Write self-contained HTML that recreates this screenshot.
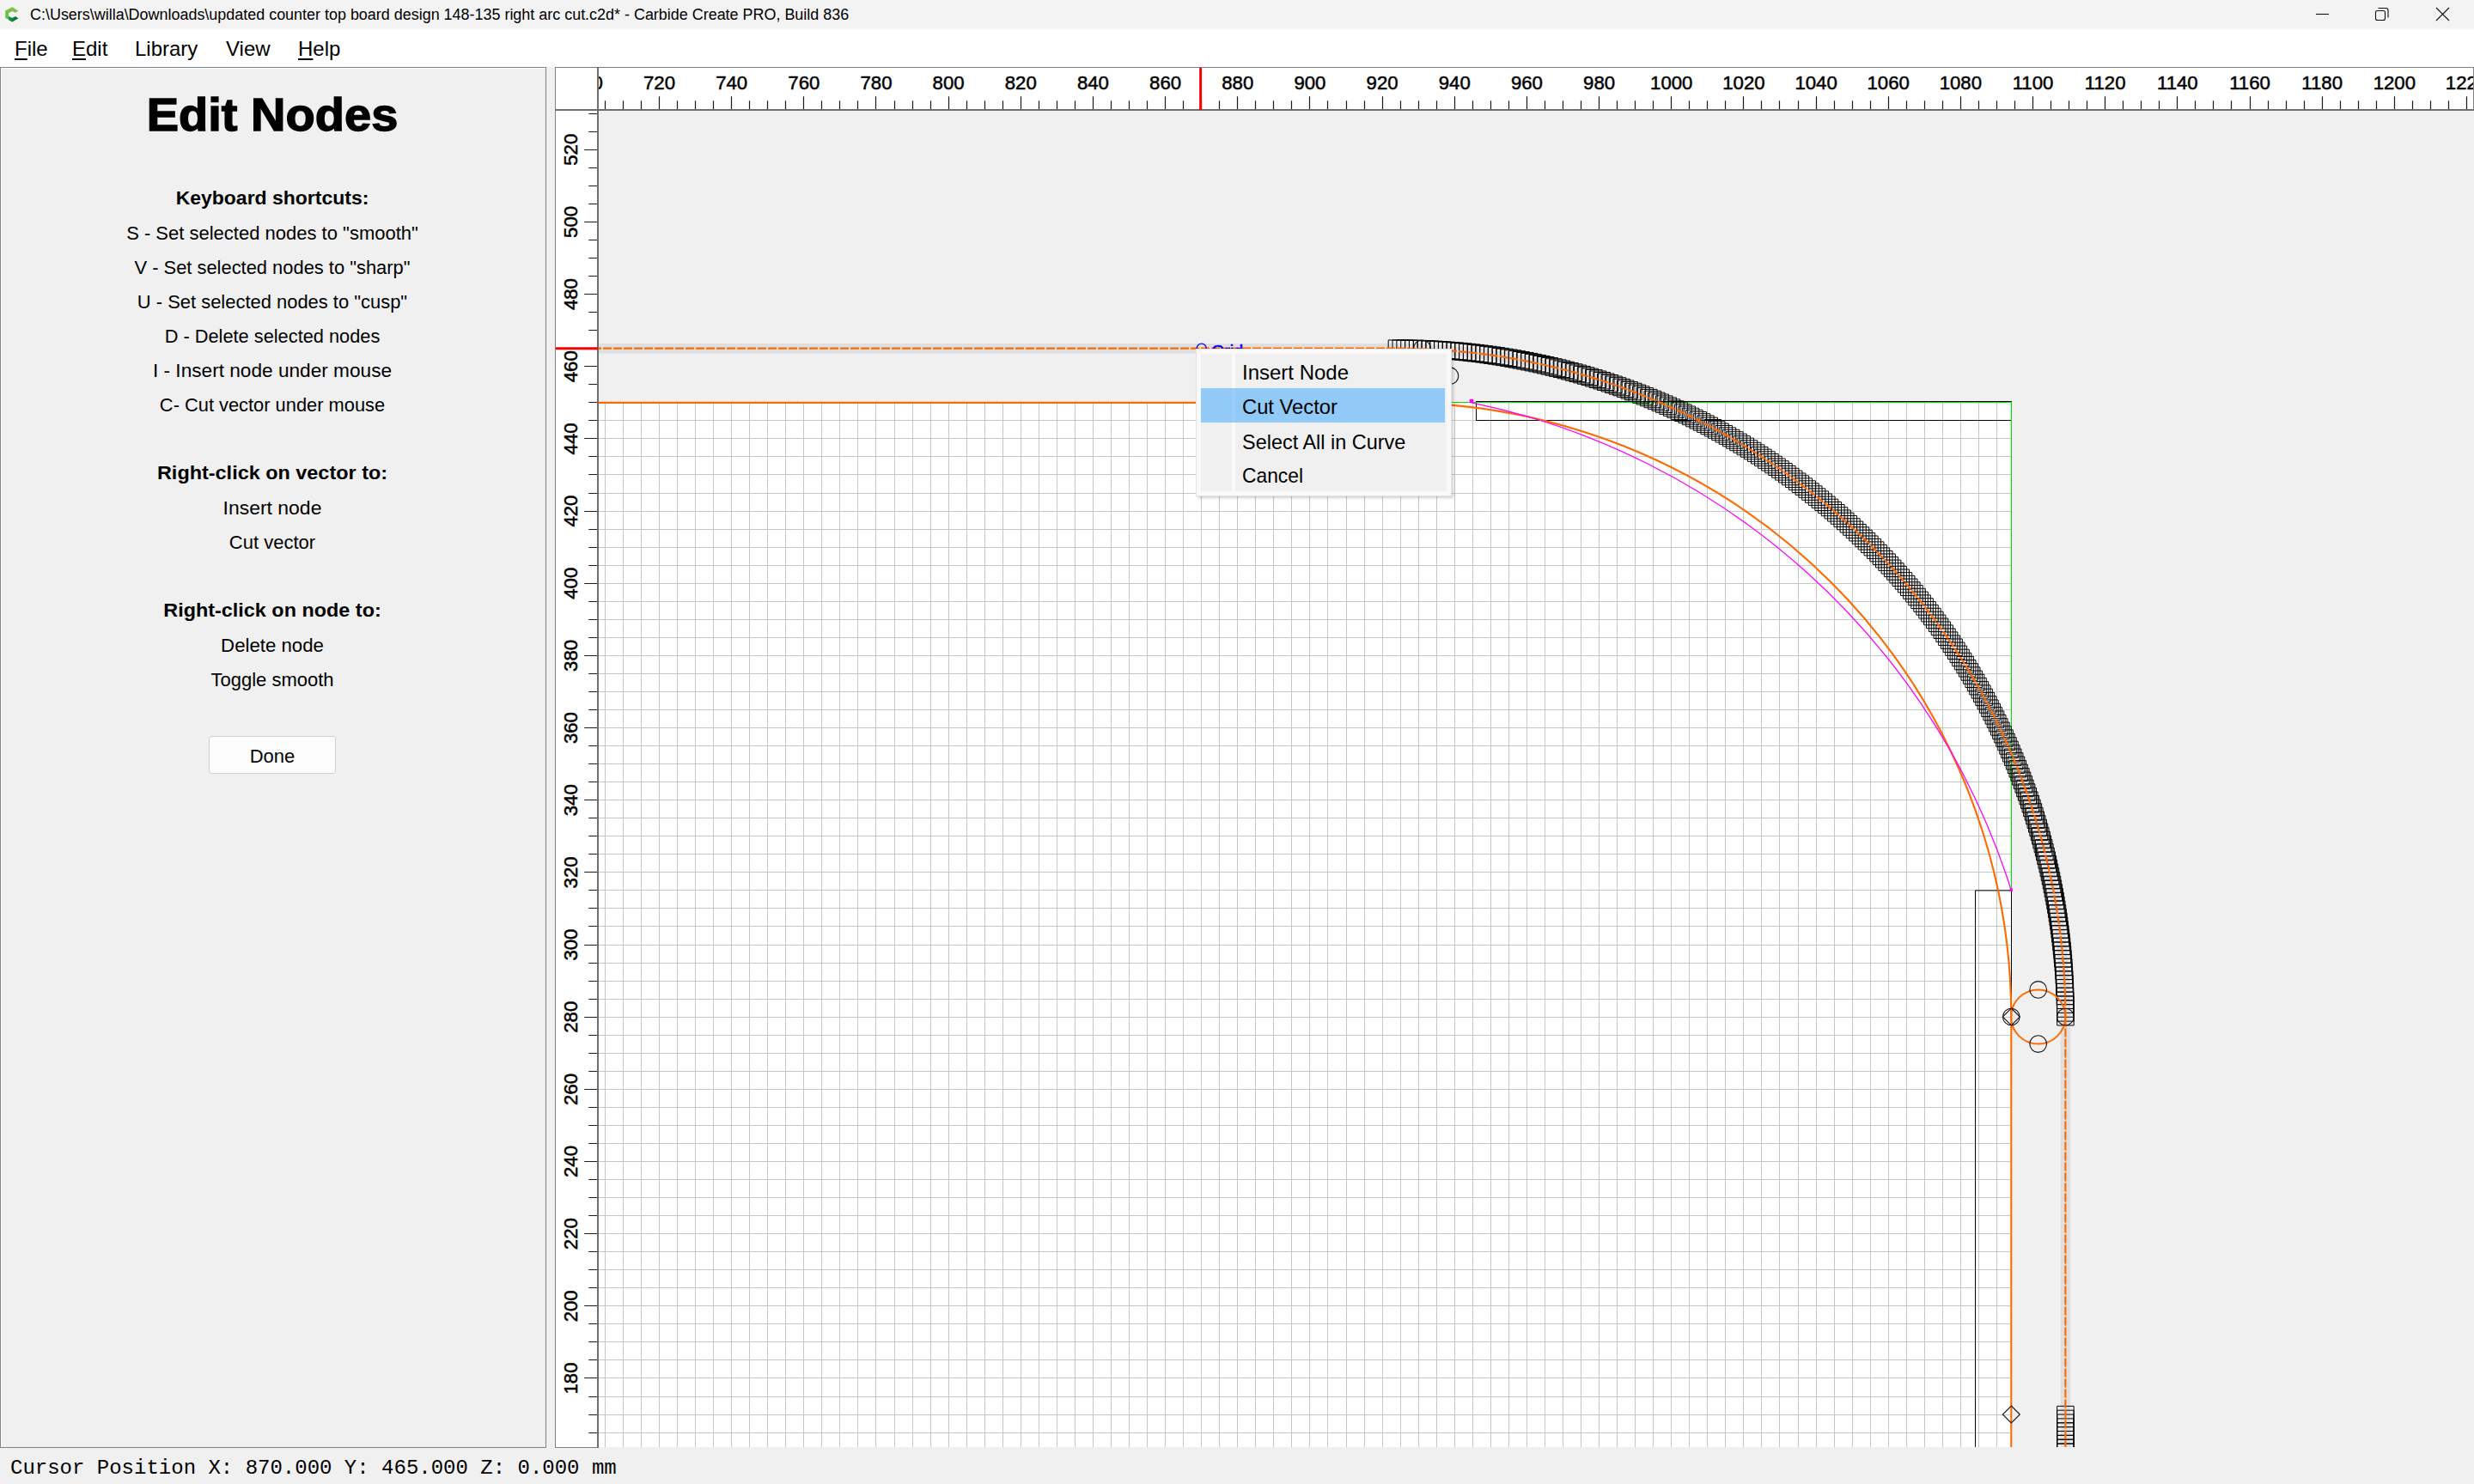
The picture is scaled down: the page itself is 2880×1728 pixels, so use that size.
<!DOCTYPE html><html><head><meta charset="utf-8"><style>
*{margin:0;padding:0;box-sizing:border-box}
html,body{width:2880px;height:1728px;overflow:hidden;background:#f0f0f0;font-family:"Liberation Sans", sans-serif;color:#000}
.abs{position:absolute}
#title{left:0;top:0;width:2880px;height:34px;background:#f3f3f3}
#menubar{left:0;top:34px;width:2880px;height:44px;background:#fff}
.mi{position:absolute;top:42px;font-size:24px;line-height:30px;white-space:nowrap}
#panel{left:0;top:78px;width:636px;height:1608px;background:#f0f0f0;border:1px solid #7a8490}
.pl{position:absolute;left:0;width:634px;text-align:center;white-space:nowrap;font-size:22px;line-height:26px}
.plb{font-weight:bold}
#done{left:243px;top:857px;width:148px;height:44px;background:#fdfdfd;border:1px solid #d0d0d0;border-radius:3px}
#status{left:12px;top:1694px;font-family:"Liberation Mono", monospace;font-size:24px;line-height:28px;white-space:nowrap}
#cmenu{left:1392px;top:406px;width:298px;height:172px;background:#f9f9f9;border:1px solid #e4e4e4;box-shadow:2px 2px 3px rgba(0,0,0,0.18)}
.cmi{position:absolute;left:1446px;font-size:24px;line-height:30px;white-space:nowrap}
</style></head><body>
<div id="title" class="abs"></div>
<svg class="abs" style="left:0;top:0" width="40" height="34" viewBox="0 0 40 34">
<defs><linearGradient id="icg" x1="0" y1="0" x2="1" y2="0"><stop offset="0" stop-color="#0f9d48"/><stop offset="1" stop-color="#05662e"/></linearGradient>
<linearGradient id="icl" x1="0" y1="0" x2="0" y2="1"><stop offset="0" stop-color="#84c540"/><stop offset="1" stop-color="#55b85a"/></linearGradient></defs>
<polygon points="14.26,8.2 21.3,12.4 17.8,14.7 14.26,13.1 10.06,15.2 10.06,18.9 14.26,21 17.8,19.2 21.3,21.3 14.26,25.5 6.2,20.8 6.2,12.2" fill="url(#icl)"/>
<polygon points="10.06,18.9 14.26,21 17.8,19.2 21.3,21.3 14.26,25.5 10.06,23.2" fill="url(#icg)"/>
</svg>
<div class="abs" id="ttl" style="left:35px;top:5px;font-size:17.95px;line-height:24px;white-space:nowrap;color:#000">C:\Users\willa\Downloads\updated counter top board design 148-135 right arc cut.c2d* - Carbide Create PRO, Build 836</div>
<svg class="abs" style="left:2680px;top:0" width="200" height="34" viewBox="2680 0 200 34">
<line x1="2696" y1="16.5" x2="2711" y2="16.5" stroke="#111" stroke-width="1.1"/>
<rect x="2765.5" y="12.5" width="11" height="11" rx="2" fill="none" stroke="#111" stroke-width="1.1"/>
<path d="M2768.5 9.5 H2777.5 a2.5 2.5 0 0 1 2.5 2.5 V20.5" fill="none" stroke="#111" stroke-width="1.1"/>
<line x1="2836" y1="9" x2="2851" y2="24" stroke="#111" stroke-width="1.1"/>
<line x1="2851" y1="9" x2="2836" y2="24" stroke="#111" stroke-width="1.1"/>
</svg>
<div id="menubar" class="abs"></div>
<div class="mi" style="left:17px"><span style="text-decoration:underline;text-underline-offset:3px;text-decoration-thickness:1.5px">F</span>ile</div>
<div class="mi" style="left:84px"><span style="text-decoration:underline;text-underline-offset:3px;text-decoration-thickness:1.5px">E</span>dit</div>
<div class="mi" style="left:157px">Library</div>
<div class="mi" style="left:263px">View</div>
<div class="mi" style="left:347px"><span style="text-decoration:underline;text-underline-offset:3px;text-decoration-thickness:1.5px">H</span>elp</div>
<div id="panel" class="abs"><div style="position:absolute;left:0;top:0;right:0;bottom:0;border-top:1px solid #fff;border-left:1px solid #fff"></div></div>
<div class="pl plb" style="top:104.03px;font-size:53px;line-height:60.9px;transform:scaleX(1.057);-webkit-text-stroke:1.4px #000;">Edit Nodes</div>
<div class="pl plb" style="top:217.64px;font-size:22.5px;line-height:25.85px;transform:scaleX(1.021);">Keyboard shortcuts:</div>
<div class="pl" style="top:258.89px;font-size:22px;line-height:25.28px;transform:scaleX(1.0);">S - Set selected nodes to &quot;smooth&quot;</div>
<div class="pl" style="top:298.89px;font-size:22px;line-height:25.28px;transform:scaleX(0.995);">V - Set selected nodes to &quot;sharp&quot;</div>
<div class="pl" style="top:338.89px;font-size:22px;line-height:25.28px;transform:scaleX(0.997);">U - Set selected nodes to &quot;cusp&quot;</div>
<div class="pl" style="top:378.89px;font-size:22px;line-height:25.28px;transform:scaleX(0.99);">D - Delete selected nodes</div>
<div class="pl" style="top:418.89px;font-size:22px;line-height:25.28px;transform:scaleX(1.029);">I - Insert node under mouse</div>
<div class="pl" style="top:458.89px;font-size:22px;line-height:25.28px;transform:scaleX(0.993);">C- Cut vector under mouse</div>
<div class="pl plb" style="top:537.64px;font-size:22.5px;line-height:25.85px;transform:scaleX(1.041);">Right-click on vector to:</div>
<div class="pl" style="top:578.79px;font-size:22px;line-height:25.28px;transform:scaleX(1.043);">Insert node</div>
<div class="pl" style="top:618.79px;font-size:22px;line-height:25.28px;transform:scaleX(1.0);">Cut vector</div>
<div class="pl plb" style="top:697.64px;font-size:22.5px;line-height:25.85px;transform:scaleX(1.04);">Right-click on node to:</div>
<div class="pl" style="top:738.79px;font-size:22px;line-height:25.28px;transform:scaleX(1.01);">Delete node</div>
<div class="pl" style="top:778.59px;font-size:22px;line-height:25.28px;transform:scaleX(1.0);">Toggle smooth</div>
<div id="done" class="abs"></div>
<div class="abs" style="left:243px;top:867.79px;width:148px;text-align:center;font-size:22px;line-height:25.28px">Done</div>
<svg class="abs" style="left:0;top:0" width="2880" height="1728" viewBox="0 0 2880 1728" shape-rendering="auto"><defs><clipPath id="cv"><rect x="697" y="129" width="2182" height="1556"/></clipPath><clipPath id="rt"><rect x="697" y="79" width="2182" height="49"/></clipPath><clipPath id="rl"><rect x="647" y="129" width="49" height="1556"/></clipPath></defs><rect x="646" y="78" width="2234" height="1608" fill="#f0f0f0"/><g clip-path="url(#cv)"><rect x="697" y="468.84" width="1645" height="1217.16" fill="#fff"/><path d="M704.5 468.84V1686M725.5 468.84V1686M746.5 468.84V1686M767.5 468.84V1686M788.5 468.84V1686M809.5 468.84V1686M830.5 468.84V1686M851.5 468.84V1686M872.5 468.84V1686M893.5 468.84V1686M914.5 468.84V1686M935.5 468.84V1686M956.5 468.84V1686M977.5 468.84V1686M998.5 468.84V1686M1019.5 468.84V1686M1041.5 468.84V1686M1062.5 468.84V1686M1083.5 468.84V1686M1104.5 468.84V1686M1125.5 468.84V1686M1146.5 468.84V1686M1167.5 468.84V1686M1188.5 468.84V1686M1209.5 468.84V1686M1230.5 468.84V1686M1251.5 468.84V1686M1272.5 468.84V1686M1293.5 468.84V1686M1314.5 468.84V1686M1335.5 468.84V1686M1356.5 468.84V1686M1377.5 468.84V1686M1398.5 468.84V1686M1419.5 468.84V1686M1440.5 468.84V1686M1461.5 468.84V1686M1482.5 468.84V1686M1503.5 468.84V1686M1524.5 468.84V1686M1545.5 468.84V1686M1567.5 468.84V1686M1588.5 468.84V1686M1609.5 468.84V1686M1630.5 468.84V1686M1651.5 468.84V1686M1672.5 468.84V1686M1693.5 468.84V1686M1714.5 468.84V1686M1735.5 468.84V1686M1756.5 468.84V1686M1777.5 468.84V1686M1798.5 468.84V1686M1819.5 468.84V1686M1840.5 468.84V1686M1861.5 468.84V1686M1882.5 468.84V1686M1903.5 468.84V1686M1924.5 468.84V1686M1945.5 468.84V1686M1966.5 468.84V1686M1987.5 468.84V1686M2008.5 468.84V1686M2029.5 468.84V1686M2050.5 468.84V1686M2071.5 468.84V1686M2093.5 468.84V1686M2114.5 468.84V1686M2135.5 468.84V1686M2156.5 468.84V1686M2177.5 468.84V1686M2198.5 468.84V1686M2219.5 468.84V1686M2240.5 468.84V1686M2261.5 468.84V1686M2282.5 468.84V1686M2303.5 468.84V1686M2324.5 468.84V1686M697 489.5H2342M697 510.5H2342M697 531.5H2342M697 552.5H2342M697 574.5H2342M697 595.5H2342M697 616.5H2342M697 637.5H2342M697 658.5H2342M697 679.5H2342M697 700.5H2342M697 721.5H2342M697 742.5H2342M697 763.5H2342M697 784.5H2342M697 805.5H2342M697 826.5H2342M697 847.5H2342M697 868.5H2342M697 889.5H2342M697 910.5H2342M697 931.5H2342M697 952.5H2342M697 973.5H2342M697 994.5H2342M697 1015.5H2342M697 1036.5H2342M697 1057.5H2342M697 1078.5H2342M697 1100.5H2342M697 1121.5H2342M697 1142.5H2342M697 1163.5H2342M697 1184.5H2342M697 1205.5H2342M697 1226.5H2342M697 1247.5H2342M697 1268.5H2342M697 1289.5H2342M697 1310.5H2342M697 1331.5H2342M697 1352.5H2342M697 1373.5H2342M697 1394.5H2342M697 1415.5H2342M697 1436.5H2342M697 1457.5H2342M697 1478.5H2342M697 1499.5H2342M697 1520.5H2342M697 1541.5H2342M697 1562.5H2342M697 1583.5H2342M697 1604.5H2342M697 1626.5H2342M697 1647.5H2342M697 1668.5H2342" stroke="#c6c6c6" stroke-width="1" fill="none"/><path d="M690 405.72H1625.93A778.48 778.48 0 0 1 2404.41 1184.2V1700" stroke="#dfdfdf" stroke-width="11.5" fill="none"/><rect x="1718.5" y="467.5" width="623" height="22" fill="none" stroke="#000" stroke-width="1"/><path d="M2299.5 1036.92V1700M2299.5 1036.92H2341.5V1700" fill="none" stroke="#000" stroke-width="1"/><path d="M697 468.5H2341.5V1036.92" fill="none" stroke="#00e600" stroke-width="1.1"/><path d="M690 468.84H1625.93A715.36 715.36 0 0 1 2341.29 1184.2V1700" stroke="#ff6a00" stroke-width="2.1" fill="none"/><path d="M1713.3 468.8A837.2 837.2 0 0 1 2341.3 1036.6" stroke="#ff00ff" stroke-width="1.3" fill="none"/><rect x="1710.8" y="464.8" width="4.5" height="4.5" fill="#ff00ff"/><rect x="2339.5" y="1034.5" width="3.5" height="3.5" fill="#ff00ff"/><path d="M1616.18 395.97h19.5v19.5h-19.5zM1621.03 395.99h19.5v19.5h-19.5zM1625.89 396.03h19.5v19.5h-19.5zM1630.74 396.11h19.5v19.5h-19.5zM1635.59 396.21h19.5v19.5h-19.5zM1640.44 396.35h19.5v19.5h-19.5zM1645.29 396.51h19.5v19.5h-19.5zM1650.14 396.71h19.5v19.5h-19.5zM1654.99 396.94h19.5v19.5h-19.5zM1659.83 397.19h19.5v19.5h-19.5zM1664.68 397.48h19.5v19.5h-19.5zM1669.52 397.8h19.5v19.5h-19.5zM1674.36 398.15h19.5v19.5h-19.5zM1679.2 398.52h19.5v19.5h-19.5zM1684.03 398.93h19.5v19.5h-19.5zM1688.86 399.37h19.5v19.5h-19.5zM1693.69 399.84h19.5v19.5h-19.5zM1698.52 400.34h19.5v19.5h-19.5zM1703.34 400.86h19.5v19.5h-19.5zM1708.16 401.42h19.5v19.5h-19.5zM1712.98 402.01h19.5v19.5h-19.5zM1717.79 402.63h19.5v19.5h-19.5zM1722.6 403.28h19.5v19.5h-19.5zM1727.41 403.96h19.5v19.5h-19.5zM1732.21 404.66h19.5v19.5h-19.5zM1737 405.4h19.5v19.5h-19.5zM1741.8 406.17h19.5v19.5h-19.5zM1746.58 406.97h19.5v19.5h-19.5zM1751.36 407.8h19.5v19.5h-19.5zM1756.14 408.65h19.5v19.5h-19.5zM1760.91 409.54h19.5v19.5h-19.5zM1765.68 410.46h19.5v19.5h-19.5zM1770.43 411.41h19.5v19.5h-19.5zM1775.19 412.38h19.5v19.5h-19.5zM1779.94 413.39h19.5v19.5h-19.5zM1784.68 414.42h19.5v19.5h-19.5zM1789.41 415.49h19.5v19.5h-19.5zM1794.14 416.58h19.5v19.5h-19.5zM1798.86 417.71h19.5v19.5h-19.5zM1803.57 418.86h19.5v19.5h-19.5zM1808.28 420.04h19.5v19.5h-19.5zM1812.98 421.25h19.5v19.5h-19.5zM1817.67 422.5h19.5v19.5h-19.5zM1822.35 423.77h19.5v19.5h-19.5zM1827.03 425.07h19.5v19.5h-19.5zM1831.69 426.4h19.5v19.5h-19.5zM1836.35 427.75h19.5v19.5h-19.5zM1841 429.14h19.5v19.5h-19.5zM1845.64 430.56h19.5v19.5h-19.5zM1850.28 432h19.5v19.5h-19.5zM1854.9 433.47h19.5v19.5h-19.5zM1859.51 434.98h19.5v19.5h-19.5zM1864.12 436.51h19.5v19.5h-19.5zM1868.71 438.07h19.5v19.5h-19.5zM1873.3 439.66h19.5v19.5h-19.5zM1877.87 441.27h19.5v19.5h-19.5zM1882.44 442.92h19.5v19.5h-19.5zM1886.99 444.59h19.5v19.5h-19.5zM1891.54 446.29h19.5v19.5h-19.5zM1896.07 448.02h19.5v19.5h-19.5zM1900.59 449.78h19.5v19.5h-19.5zM1905.1 451.57h19.5v19.5h-19.5zM1909.6 453.39h19.5v19.5h-19.5zM1914.09 455.23h19.5v19.5h-19.5zM1918.57 457.1h19.5v19.5h-19.5zM1923.04 459h19.5v19.5h-19.5zM1927.49 460.92h19.5v19.5h-19.5zM1931.93 462.88h19.5v19.5h-19.5zM1936.36 464.86h19.5v19.5h-19.5zM1940.78 466.87h19.5v19.5h-19.5zM1945.18 468.91h19.5v19.5h-19.5zM1949.57 470.97h19.5v19.5h-19.5zM1953.95 473.06h19.5v19.5h-19.5zM1958.32 475.18h19.5v19.5h-19.5zM1962.67 477.33h19.5v19.5h-19.5zM1967.01 479.5h19.5v19.5h-19.5zM1971.33 481.7h19.5v19.5h-19.5zM1975.64 483.93h19.5v19.5h-19.5zM1979.94 486.18h19.5v19.5h-19.5zM1984.22 488.46h19.5v19.5h-19.5zM1988.49 490.77h19.5v19.5h-19.5zM1992.75 493.11h19.5v19.5h-19.5zM1996.99 495.47h19.5v19.5h-19.5zM2001.21 497.85h19.5v19.5h-19.5zM2005.42 500.27h19.5v19.5h-19.5zM2009.62 502.71h19.5v19.5h-19.5zM2013.8 505.17h19.5v19.5h-19.5zM2017.96 507.66h19.5v19.5h-19.5zM2022.11 510.18h19.5v19.5h-19.5zM2026.24 512.72h19.5v19.5h-19.5zM2030.36 515.29h19.5v19.5h-19.5zM2034.46 517.89h19.5v19.5h-19.5zM2038.54 520.51h19.5v19.5h-19.5zM2042.61 523.15h19.5v19.5h-19.5zM2046.66 525.82h19.5v19.5h-19.5zM2050.7 528.52h19.5v19.5h-19.5zM2054.72 531.24h19.5v19.5h-19.5zM2058.72 533.99h19.5v19.5h-19.5zM2062.7 536.76h19.5v19.5h-19.5zM2066.67 539.55h19.5v19.5h-19.5zM2070.61 542.37h19.5v19.5h-19.5zM2074.55 545.22h19.5v19.5h-19.5zM2078.46 548.09h19.5v19.5h-19.5zM2082.35 550.98h19.5v19.5h-19.5zM2086.23 553.9h19.5v19.5h-19.5zM2090.09 556.84h19.5v19.5h-19.5zM2093.93 559.81h19.5v19.5h-19.5zM2097.75 562.8h19.5v19.5h-19.5zM2101.56 565.81h19.5v19.5h-19.5zM2105.34 568.85h19.5v19.5h-19.5zM2109.11 571.91h19.5v19.5h-19.5zM2112.85 574.99h19.5v19.5h-19.5zM2116.58 578.1h19.5v19.5h-19.5zM2120.29 581.23h19.5v19.5h-19.5zM2123.97 584.38h19.5v19.5h-19.5zM2127.64 587.56h19.5v19.5h-19.5zM2131.29 590.76h19.5v19.5h-19.5zM2134.92 593.98h19.5v19.5h-19.5zM2138.53 597.23h19.5v19.5h-19.5zM2142.12 600.49h19.5v19.5h-19.5zM2145.68 603.78h19.5v19.5h-19.5zM2149.23 607.1h19.5v19.5h-19.5zM2152.76 610.43h19.5v19.5h-19.5zM2156.26 613.78h19.5v19.5h-19.5zM2159.75 617.16h19.5v19.5h-19.5zM2163.21 620.56h19.5v19.5h-19.5zM2166.65 623.98h19.5v19.5h-19.5zM2170.07 627.42h19.5v19.5h-19.5zM2173.47 630.89h19.5v19.5h-19.5zM2176.85 634.37h19.5v19.5h-19.5zM2180.2 637.88h19.5v19.5h-19.5zM2183.54 641.4h19.5v19.5h-19.5zM2186.85 644.95h19.5v19.5h-19.5zM2190.14 648.52h19.5v19.5h-19.5zM2193.4 652.1h19.5v19.5h-19.5zM2196.65 655.71h19.5v19.5h-19.5zM2199.87 659.34h19.5v19.5h-19.5zM2203.07 662.99h19.5v19.5h-19.5zM2206.25 666.66h19.5v19.5h-19.5zM2209.4 670.35h19.5v19.5h-19.5zM2212.53 674.05h19.5v19.5h-19.5zM2215.64 677.78h19.5v19.5h-19.5zM2218.72 681.53h19.5v19.5h-19.5zM2221.78 685.29h19.5v19.5h-19.5zM2224.82 689.08h19.5v19.5h-19.5zM2227.84 692.88h19.5v19.5h-19.5zM2230.83 696.7h19.5v19.5h-19.5zM2233.79 700.54h19.5v19.5h-19.5zM2236.73 704.4h19.5v19.5h-19.5zM2239.65 708.28h19.5v19.5h-19.5zM2242.55 712.17h19.5v19.5h-19.5zM2245.41 716.09h19.5v19.5h-19.5zM2248.26 720.02h19.5v19.5h-19.5zM2251.08 723.97h19.5v19.5h-19.5zM2253.88 727.93h19.5v19.5h-19.5zM2256.65 731.92h19.5v19.5h-19.5zM2259.39 735.92h19.5v19.5h-19.5zM2262.11 739.93h19.5v19.5h-19.5zM2264.81 743.97h19.5v19.5h-19.5zM2267.48 748.02h19.5v19.5h-19.5zM2270.13 752.09h19.5v19.5h-19.5zM2272.75 756.17h19.5v19.5h-19.5zM2275.34 760.27h19.5v19.5h-19.5zM2277.91 764.39h19.5v19.5h-19.5zM2280.45 768.52h19.5v19.5h-19.5zM2282.97 772.67h19.5v19.5h-19.5zM2285.46 776.84h19.5v19.5h-19.5zM2287.93 781.02h19.5v19.5h-19.5zM2290.37 785.21h19.5v19.5h-19.5zM2292.78 789.42h19.5v19.5h-19.5zM2295.17 793.64h19.5v19.5h-19.5zM2297.53 797.88h19.5v19.5h-19.5zM2299.86 802.14h19.5v19.5h-19.5zM2302.17 806.41h19.5v19.5h-19.5zM2304.45 810.69h19.5v19.5h-19.5zM2306.7 814.99h19.5v19.5h-19.5zM2308.93 819.3h19.5v19.5h-19.5zM2311.13 823.62h19.5v19.5h-19.5zM2313.3 827.96h19.5v19.5h-19.5zM2315.45 832.31h19.5v19.5h-19.5zM2317.57 836.68h19.5v19.5h-19.5zM2319.66 841.06h19.5v19.5h-19.5zM2321.72 845.45h19.5v19.5h-19.5zM2323.76 849.85h19.5v19.5h-19.5zM2325.77 854.27h19.5v19.5h-19.5zM2327.75 858.7h19.5v19.5h-19.5zM2329.71 863.14h19.5v19.5h-19.5zM2331.63 867.6h19.5v19.5h-19.5zM2333.53 872.06h19.5v19.5h-19.5zM2335.4 876.54h19.5v19.5h-19.5zM2337.25 881.03h19.5v19.5h-19.5zM2339.06 885.53h19.5v19.5h-19.5zM2340.85 890.04h19.5v19.5h-19.5zM2342.61 894.56h19.5v19.5h-19.5zM2344.34 899.1h19.5v19.5h-19.5zM2346.04 903.64h19.5v19.5h-19.5zM2347.71 908.19h19.5v19.5h-19.5zM2349.36 912.76h19.5v19.5h-19.5zM2350.98 917.33h19.5v19.5h-19.5zM2352.56 921.92h19.5v19.5h-19.5zM2354.12 926.51h19.5v19.5h-19.5zM2355.66 931.12h19.5v19.5h-19.5zM2357.16 935.73h19.5v19.5h-19.5zM2358.63 940.36h19.5v19.5h-19.5zM2360.08 944.99h19.5v19.5h-19.5zM2361.49 949.63h19.5v19.5h-19.5zM2362.88 954.28h19.5v19.5h-19.5zM2364.24 958.94h19.5v19.5h-19.5zM2365.57 963.61h19.5v19.5h-19.5zM2366.87 968.28h19.5v19.5h-19.5zM2368.14 972.96h19.5v19.5h-19.5zM2369.38 977.66h19.5v19.5h-19.5zM2370.59 982.35h19.5v19.5h-19.5zM2371.77 987.06h19.5v19.5h-19.5zM2372.93 991.77h19.5v19.5h-19.5zM2374.05 996.49h19.5v19.5h-19.5zM2375.14 1001.22h19.5v19.5h-19.5zM2376.21 1005.96h19.5v19.5h-19.5zM2377.24 1010.7h19.5v19.5h-19.5zM2378.25 1015.44h19.5v19.5h-19.5zM2379.23 1020.2h19.5v19.5h-19.5zM2380.17 1024.96h19.5v19.5h-19.5zM2381.09 1029.72h19.5v19.5h-19.5zM2381.98 1034.49h19.5v19.5h-19.5zM2382.84 1039.27h19.5v19.5h-19.5zM2383.66 1044.05h19.5v19.5h-19.5zM2384.46 1048.84h19.5v19.5h-19.5zM2385.23 1053.63h19.5v19.5h-19.5zM2385.97 1058.42h19.5v19.5h-19.5zM2386.68 1063.22h19.5v19.5h-19.5zM2387.35 1068.03h19.5v19.5h-19.5zM2388 1072.84h19.5v19.5h-19.5zM2388.62 1077.65h19.5v19.5h-19.5zM2389.21 1082.47h19.5v19.5h-19.5zM2389.77 1087.29h19.5v19.5h-19.5zM2390.3 1092.11h19.5v19.5h-19.5zM2390.79 1096.94h19.5v19.5h-19.5zM2391.26 1101.77h19.5v19.5h-19.5zM2391.7 1106.6h19.5v19.5h-19.5zM2392.11 1111.44h19.5v19.5h-19.5zM2392.49 1116.27h19.5v19.5h-19.5zM2392.83 1121.11h19.5v19.5h-19.5zM2393.15 1125.96h19.5v19.5h-19.5zM2393.44 1130.8h19.5v19.5h-19.5zM2393.69 1135.65h19.5v19.5h-19.5zM2393.92 1140.49h19.5v19.5h-19.5zM2394.12 1145.34h19.5v19.5h-19.5zM2394.28 1150.19h19.5v19.5h-19.5zM2394.42 1155.04h19.5v19.5h-19.5zM2394.53 1159.89h19.5v19.5h-19.5zM2394.6 1164.75h19.5v19.5h-19.5zM2394.65 1169.6h19.5v19.5h-19.5zM2394.66 1174.45h19.5v19.5h-19.5zM2394.66 1637.33h19.5v19.5h-19.5zM2394.66 1642.18h19.5v19.5h-19.5zM2394.66 1647.03h19.5v19.5h-19.5zM2394.66 1651.88h19.5v19.5h-19.5zM2394.66 1656.73h19.5v19.5h-19.5zM2394.66 1661.58h19.5v19.5h-19.5zM2394.66 1666.43h19.5v19.5h-19.5zM2394.66 1671.28h19.5v19.5h-19.5zM2394.66 1676.13h19.5v19.5h-19.5zM2394.66 1680.98h19.5v19.5h-19.5zM2394.66 1685.83h19.5v19.5h-19.5z" stroke="#000" stroke-width="1" fill="none"/><path d="M690 405.72H1625.93A778.48 778.48 0 0 1 2404.41 1184.2V1700" stroke="#ff6a00" stroke-width="2.2" fill="none" stroke-dasharray="10 2" stroke-dashoffset="0"/><circle cx="2372.7" cy="1184" r="31.6" fill="none" stroke="#ff6a00" stroke-width="2.0"/><circle cx="2372.7" cy="1152.4" r="9.8" fill="none" stroke="#111" stroke-width="1.1"/><circle cx="2372.7" cy="1215.6" r="9.8" fill="none" stroke="#111" stroke-width="1.1"/><circle cx="2404.4" cy="1184" r="9.8" fill="none" stroke="#111" stroke-width="1.1"/><circle cx="2341.3" cy="1184" r="9.8" fill="none" stroke="#111" stroke-width="1.1"/><path d="M2341.3 1174L2351.3 1184L2341.3 1194L2331.3 1184Z" fill="none" stroke="#222" stroke-width="1.2"/><path d="M2341.3 1637L2351.3 1647L2341.3 1657L2331.3 1647Z" fill="none" stroke="#222" stroke-width="1.2"/><circle cx="1655.5" cy="406" r="10" fill="none" stroke="#111" stroke-width="1.1"/><circle cx="1688" cy="437.7" r="9.8" fill="none" stroke="#111" stroke-width="1.1"/><circle cx="1398.7" cy="405.6" r="5.5" fill="none" stroke="#0000ff" stroke-width="1.3"/><text x="1410.2" y="416" font-family="Liberation Sans" font-size="19.5" fill="#0000ff" stroke="#0000ff" stroke-width="0.6">Grid</text></g><rect x="646.5" y="78.5" width="2233" height="50" fill="#fff" stroke="#808080" stroke-width="1"/><rect x="646.5" y="78.5" width="50" height="1607" fill="#fff" stroke="#808080" stroke-width="1"/><path d="M704.5 117.2V128M725.5 117.2V128M746.5 117.2V128M767.5 112.2V128M788.5 117.2V128M809.5 117.2V128M830.5 117.2V128M851.5 112.2V128M872.5 117.2V128M893.5 117.2V128M914.5 117.2V128M935.5 112.2V128M956.5 117.2V128M977.5 117.2V128M998.5 117.2V128M1019.5 112.2V128M1041.5 117.2V128M1062.5 117.2V128M1083.5 117.2V128M1104.5 112.2V128M1125.5 117.2V128M1146.5 117.2V128M1167.5 117.2V128M1188.5 112.2V128M1209.5 117.2V128M1230.5 117.2V128M1251.5 117.2V128M1272.5 112.2V128M1293.5 117.2V128M1314.5 117.2V128M1335.5 117.2V128M1356.5 112.2V128M1377.5 117.2V128M1398.5 117.2V128M1419.5 117.2V128M1440.5 112.2V128M1461.5 117.2V128M1482.5 117.2V128M1503.5 117.2V128M1524.5 112.2V128M1545.5 117.2V128M1567.5 117.2V128M1588.5 117.2V128M1609.5 112.2V128M1630.5 117.2V128M1651.5 117.2V128M1672.5 117.2V128M1693.5 112.2V128M1714.5 117.2V128M1735.5 117.2V128M1756.5 117.2V128M1777.5 112.2V128M1798.5 117.2V128M1819.5 117.2V128M1840.5 117.2V128M1861.5 112.2V128M1882.5 117.2V128M1903.5 117.2V128M1924.5 117.2V128M1945.5 112.2V128M1966.5 117.2V128M1987.5 117.2V128M2008.5 117.2V128M2029.5 112.2V128M2050.5 117.2V128M2071.5 117.2V128M2093.5 117.2V128M2114.5 112.2V128M2135.5 117.2V128M2156.5 117.2V128M2177.5 117.2V128M2198.5 112.2V128M2219.5 117.2V128M2240.5 117.2V128M2261.5 117.2V128M2282.5 112.2V128M2303.5 117.2V128M2324.5 117.2V128M2345.5 117.2V128M2366.5 112.2V128M2387.5 117.2V128M2408.5 117.2V128M2429.5 117.2V128M2450.5 112.2V128M2471.5 117.2V128M2492.5 117.2V128M2513.5 117.2V128M2534.5 112.2V128M2555.5 117.2V128M2576.5 117.2V128M2597.5 117.2V128M2619.5 112.2V128M2640.5 117.2V128M2661.5 117.2V128M2682.5 117.2V128M2703.5 112.2V128M2724.5 117.2V128M2745.5 117.2V128M2766.5 117.2V128M2787.5 112.2V128M2808.5 117.2V128M2829.5 117.2V128M2850.5 117.2V128M2871.5 112.2V128" stroke="#1a1a1a" stroke-width="1.2" fill="none"/><g clip-path="url(#rt)" font-family="Liberation Sans" font-size="22.2" fill="#000" stroke="#000" stroke-width="0.5"><text x="683.34" y="104" text-anchor="middle">700</text><text x="767.5" y="104" text-anchor="middle">720</text><text x="851.66" y="104" text-anchor="middle">740</text><text x="935.82" y="104" text-anchor="middle">760</text><text x="1019.98" y="104" text-anchor="middle">780</text><text x="1104.14" y="104" text-anchor="middle">800</text><text x="1188.3" y="104" text-anchor="middle">820</text><text x="1272.46" y="104" text-anchor="middle">840</text><text x="1356.62" y="104" text-anchor="middle">860</text><text x="1440.78" y="104" text-anchor="middle">880</text><text x="1524.94" y="104" text-anchor="middle">900</text><text x="1609.1" y="104" text-anchor="middle">920</text><text x="1693.26" y="104" text-anchor="middle">940</text><text x="1777.42" y="104" text-anchor="middle">960</text><text x="1861.58" y="104" text-anchor="middle">980</text><text x="1945.74" y="104" text-anchor="middle">1000</text><text x="2029.9" y="104" text-anchor="middle">1020</text><text x="2114.06" y="104" text-anchor="middle">1040</text><text x="2198.22" y="104" text-anchor="middle">1060</text><text x="2282.38" y="104" text-anchor="middle">1080</text><text x="2366.54" y="104" text-anchor="middle">1100</text><text x="2450.7" y="104" text-anchor="middle">1120</text><text x="2534.86" y="104" text-anchor="middle">1140</text><text x="2619.02" y="104" text-anchor="middle">1160</text><text x="2703.18" y="104" text-anchor="middle">1180</text><text x="2787.34" y="104" text-anchor="middle">1200</text><text x="2871.5" y="104" text-anchor="middle">1220</text></g><path d="M685.2 132.5H696M685.2 153.5H696M680.2 174.5H696M685.2 195.5H696M685.2 216.5H696M685.2 237.5H696M680.2 258.5H696M685.2 279.5H696M685.2 300.5H696M685.2 321.5H696M680.2 342.5H696M685.2 363.5H696M685.2 384.5H696M685.2 405.5H696M680.2 426.5H696M685.2 447.5H696M685.2 468.5H696M685.2 489.5H696M680.2 510.5H696M685.2 531.5H696M685.2 552.5H696M685.2 574.5H696M680.2 595.5H696M685.2 616.5H696M685.2 637.5H696M685.2 658.5H696M680.2 679.5H696M685.2 700.5H696M685.2 721.5H696M685.2 742.5H696M680.2 763.5H696M685.2 784.5H696M685.2 805.5H696M685.2 826.5H696M680.2 847.5H696M685.2 868.5H696M685.2 889.5H696M685.2 910.5H696M680.2 931.5H696M685.2 952.5H696M685.2 973.5H696M685.2 994.5H696M680.2 1015.5H696M685.2 1036.5H696M685.2 1057.5H696M685.2 1078.5H696M680.2 1100.5H696M685.2 1121.5H696M685.2 1142.5H696M685.2 1163.5H696M680.2 1184.5H696M685.2 1205.5H696M685.2 1226.5H696M685.2 1247.5H696M680.2 1268.5H696M685.2 1289.5H696M685.2 1310.5H696M685.2 1331.5H696M680.2 1352.5H696M685.2 1373.5H696M685.2 1394.5H696M685.2 1415.5H696M680.2 1436.5H696M685.2 1457.5H696M685.2 1478.5H696M685.2 1499.5H696M680.2 1520.5H696M685.2 1541.5H696M685.2 1562.5H696M685.2 1583.5H696M680.2 1604.5H696M685.2 1626.5H696M685.2 1647.5H696M685.2 1668.5H696" stroke="#1a1a1a" stroke-width="1.2" fill="none"/><g clip-path="url(#rl)" font-family="Liberation Sans" font-size="22.2" fill="#000" stroke="#000" stroke-width="0.5"><text transform="translate(671.8 174.28) rotate(-90)" x="0" y="0" text-anchor="middle">520</text><text transform="translate(671.8 258.44) rotate(-90)" x="0" y="0" text-anchor="middle">500</text><text transform="translate(671.8 342.6) rotate(-90)" x="0" y="0" text-anchor="middle">480</text><text transform="translate(671.8 426.76) rotate(-90)" x="0" y="0" text-anchor="middle">460</text><text transform="translate(671.8 510.92) rotate(-90)" x="0" y="0" text-anchor="middle">440</text><text transform="translate(671.8 595.08) rotate(-90)" x="0" y="0" text-anchor="middle">420</text><text transform="translate(671.8 679.24) rotate(-90)" x="0" y="0" text-anchor="middle">400</text><text transform="translate(671.8 763.4) rotate(-90)" x="0" y="0" text-anchor="middle">380</text><text transform="translate(671.8 847.56) rotate(-90)" x="0" y="0" text-anchor="middle">360</text><text transform="translate(671.8 931.72) rotate(-90)" x="0" y="0" text-anchor="middle">340</text><text transform="translate(671.8 1015.88) rotate(-90)" x="0" y="0" text-anchor="middle">320</text><text transform="translate(671.8 1100.04) rotate(-90)" x="0" y="0" text-anchor="middle">300</text><text transform="translate(671.8 1184.2) rotate(-90)" x="0" y="0" text-anchor="middle">280</text><text transform="translate(671.8 1268.36) rotate(-90)" x="0" y="0" text-anchor="middle">260</text><text transform="translate(671.8 1352.52) rotate(-90)" x="0" y="0" text-anchor="middle">240</text><text transform="translate(671.8 1436.68) rotate(-90)" x="0" y="0" text-anchor="middle">220</text><text transform="translate(671.8 1520.84) rotate(-90)" x="0" y="0" text-anchor="middle">200</text><text transform="translate(671.8 1605) rotate(-90)" x="0" y="0" text-anchor="middle">180</text></g><path d="M646 128H2880" stroke="#6e6e6e" stroke-width="2" fill="none"/><path d="M696 78V1686" stroke="#6e6e6e" stroke-width="2" fill="none"/><path d="M1397.6 79V128" stroke="#ff0000" stroke-width="3" fill="none"/><path d="M647 405.72H696" stroke="#ff0000" stroke-width="3" fill="none"/></svg>
<div id="cmenu" class="abs"></div>
<div class="abs" style="left:1398px;top:412px;width:286px;height:160px;background:#f0f0f0"></div>
<div class="abs" style="left:1434px;top:412px;width:4px;height:160px;background:#f9f9f9"></div>
<div class="abs" style="left:1398px;top:452px;width:284px;height:40px;background:#91c9f7"></div>
<div class="abs" style="left:1434px;top:452px;width:4px;height:40px;background:#9ccef7"></div>
<div class="cmi" style="top:420.28px;line-height:27.58px;transform-origin:0 0;transform:scaleX(1.0)">Insert Node</div>
<div class="cmi" style="top:460.48px;line-height:27.58px;transform-origin:0 0;transform:scaleX(0.99)">Cut Vector</div>
<div class="cmi" style="top:500.58px;line-height:27.58px;transform-origin:0 0;transform:scaleX(0.977)">Select All in Curve</div>
<div class="cmi" style="top:540.28px;line-height:27.58px;transform-origin:0 0;transform:scaleX(0.95)">Cancel</div>
<div id="status" class="abs" style="top:1695.88px;line-height:27.19px">Cursor Position X: 870.000 Y: 465.000 Z: 0.000 mm</div>
</body></html>
